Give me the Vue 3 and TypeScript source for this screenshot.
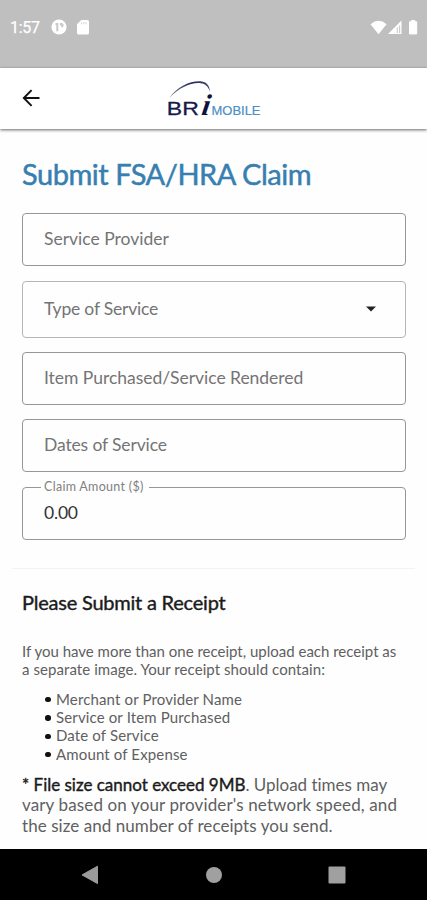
<script setup lang="ts">
interface Field {
  id: string
  label: string
  kind: 'text' | 'select' | 'filled'
  value?: string
}

const fields: Field[] = [
  { id: 'provider', label: 'Service Provider', kind: 'text' },
  { id: 'type', label: 'Type of Service', kind: 'select' },
  { id: 'item', label: 'Item Purchased/Service Rendered', kind: 'text' },
  { id: 'dates', label: 'Dates of Service', kind: 'text' },
  { id: 'amount', label: 'Claim Amount ($)', kind: 'filled', value: '0.00' },
]

const receiptItems: string[] = [
  'Merchant or Provider Name',
  'Service or Item Purchased',
  'Date of Service',
  'Amount of Expense',
]
</script>

<template>
  <div class="screen">
    <div class="status">
      <span class="clock">1:57</span>
      <svg class="app-icon" width="16" height="16" viewBox="0 0 16 16">
        <circle cx="8" cy="8" r="7.6" fill="#fff" />
        <path d="M4.500 4h2.800v8.300H5.300V6H4.500zM8.900 4h1.200c1.600 0 2.500.9 2.500 2.200S11.700 8.500 10.300 8.500V6.500H8.900z" fill="#c8c8c8" />
      </svg>
      <svg class="sd-icon" width="12" height="15" viewBox="0 0 12 15">
        <path d="M4.300 0H10.500Q12 0 12 1.500V13Q12 14.500 10.500 14.500H1.500Q0 14.500 0 13V4.300z" fill="#fff" />
        <path d="M4.600 2.300v2M6.800 2.300v2M9 2.300v2" stroke="#dcdcdc" stroke-width="1.300" />
      </svg>
      <svg class="signals" width="50" height="16" viewBox="0 0 50 16">
        <path d="M.5 4.200Q8.500-2.600 16.500 4.200L8.500 14.200z" fill="#fff" />
        <path d="M31.500.5V14H18z" fill="#fff" />
        <path d="M27.300 7.300V13M29.600 5.500V13" stroke="#cacaca" stroke-width="1.100" />
        <path d="M39.500 1.800h2V.3h3.200v1.500h2V13.900h-7.200z" fill="#fff" stroke="#fff" stroke-linejoin="round" />
      </svg>
    </div>

    <header class="appbar">
      <svg class="back" width="18" height="18" viewBox="0 0 18 18" fill="none" stroke="#111" stroke-width="1.900">
        <path d="M17.500 9H2M9.600 1.200L1.800 9l7.800 7.800" />
      </svg>
      <svg class="logo" width="100" height="40" viewBox="0 0 100 40">
        <defs>
          <linearGradient id="arc" x1="0" x2="1" y1="0" y2="0">
            <stop offset="0" stop-color="#777b8c" />
            <stop offset=".55" stop-color="#252c60" />
            <stop offset="1" stop-color="#454b70" />
          </linearGradient>
        </defs>
        <path d="M3 18.500C12 5.500 26 .2 36 1.500c5 .7 7.600 4.300 8 10.200C42 6.200 39.500 3.700 34.500 3.200 25 2.300 13 7.500 3 18.500z" fill="url(#arc)" />
        <text x=".8" y="35" class="bri" textLength="32" lengthAdjust="spacingAndGlyphs">BR</text>
        <text x="0" y="0" class="bigi" transform="translate(34.700 35) skewX(-9)">i</text>
        <text x="45.500" y="34.800" class="mobile" textLength="49" lengthAdjust="spacingAndGlyphs">MOBILE</text>
      </svg>
    </header>

    <main class="content">
      <h1>Submit FSA/HRA Claim</h1>
      <form class="fields">
        <div v-for="f in fields" :key="f.id" class="field" :class="[f.kind, f.id]">
          <span v-if="f.kind === 'filled'" class="floating">{{ f.label }}</span>
          <span v-if="f.kind === 'filled'" class="value">{{ f.value }}</span>
          <span v-else class="label">{{ f.label }}</span>
          <svg v-if="f.kind === 'select'" class="caret" width="10" height="6" viewBox="0 0 10 6">
            <path d="M0 .5h10L5 5.500z" fill="#222" />
          </svg>
        </div>
      </form>
      <hr>
      <section class="receipt">
        <h2>Please Submit a Receipt</h2>
        <p class="intro">
          <span class="l1">If you have more than one receipt, upload each receipt as</span><br>
          <span class="l2">a separate image. Your receipt should contain:</span>
        </p>
        <ul>
          <li v-for="item in receiptItems" :key="item">{{ item }}</li>
        </ul>
        <p class="note">
          <span class="n1"><strong>* File size cannot exceed 9MB</strong>. Upload times may</span><br>
          <span class="n2">vary based on your provider's network speed, and</span><br>
          <span class="n3">the size and number of receipts you send.</span>
        </p>
      </section>
    </main>

    <nav class="navbar">
      <svg width="18" height="20" viewBox="0 0 18 20"><path d="M16.500 1.200v17.400L1 9.900z" fill="#9b9b9b" stroke="#9b9b9b" stroke-linejoin="round" /></svg>
      <svg width="18" height="20" viewBox="0 0 18 20"><circle cx="9" cy="10" r="8" fill="#a0a0a0" /></svg>
      <svg width="18" height="20" viewBox="0 0 18 20"><rect x=".5" y="1.500" width="17" height="17" rx="1" fill="#a0a0a0" /></svg>
    </nav>
  </div>
</template>

<style>
body { background: #fff; }
</style>

<style scoped>
.screen {
  width: 427px;
  height: 900px;
  display: flex;
  flex-direction: column;
  overflow: hidden;
  background: #fefefe;
  font-family: Lato, "Liberation Sans", sans-serif;
  font-variant-ligatures: none;
  color: #606060;
}
.status {
  height: 67.500px;
  box-sizing: border-box;
  flex: none;
  display: flex;
  align-items: flex-start;
  padding: 19px 7px 0 10px;
  background: #bfbfbf;
}
.clock {
  width: 41px;
  font: 400 16px/18px Roboto, sans-serif;
  letter-spacing: -.3px;
  color: #fff;
  -webkit-text-stroke: .25px #fff;
}
.sd-icon { margin: 1px 0 0 10px; }
.signals { margin: 1px 0 0 auto; }
.appbar {
  height: 61px;
  flex: none;
  display: flex;
  align-items: flex-start;
  background: #fff;
  box-shadow: 0 1px 3px rgba(0, 0, 0, .6);
}
.back { margin: 21.500px 0 0 22px; }
.logo { margin: 12px 0 0 126px; overflow: visible; }
.bri { font: 400 19px "Liberation Sans", sans-serif; fill: #16194d; stroke: #16194d; stroke-width: .3px; }
.bigi { font: italic 700 30px "Liberation Serif", serif; fill: #0e123d; }
.mobile { font: 400 12px "Liberation Sans", sans-serif; fill: #4c8fc6; stroke: #4c8fc6; stroke-width: .2px; }
.content { flex: 1; }
h1 {
  margin: 27.500px 0 0 22px;
  font-size: 29px;
  line-height: 36px;
  font-weight: 400;
  letter-spacing: -.46px;
  color: #377fb0;
  -webkit-text-stroke: .5px #377fb0;
  white-space: nowrap;
}
.fields {
  margin: 21px 21px 0 22px;
  display: flex;
  flex-direction: column;
  gap: 15px;
}
.field {
  height: 53px;
  box-sizing: border-box;
  display: flex;
  align-items: center;
  padding: 0 29px 2px 21px;
  border: 1px solid #969696;
  border-radius: 4px;
  position: relative;
}
.select { height: 57px; padding-bottom: 2px; border-color: #b5b5b5; margin-bottom: -1px; }
.item { margin-bottom: -1px; }
.label { font-size: 17.500px; color: #747474; white-space: nowrap; }
.type .label { letter-spacing: -.2px; }
.item .label { letter-spacing: -.03px; }
.dates .label { letter-spacing: -.13px; }
.caret { margin-left: auto; }
.filled { padding-bottom: 2px; }
.value { font-size: 17.500px; letter-spacing: -.2px; color: #333; }
.floating {
  position: absolute;
  left: 18px;
  top: -9px;
  padding: 0 5px 0 3px;
  font-size: 12.500px;
  letter-spacing: .3px;
  line-height: 16px;
  background: #fefefe;
  color: #808080;
  white-space: nowrap;
}
hr { margin: 28px 12px 0; border: 0; border-top: 1px solid #f3f3f3; }
.receipt { padding: 20.500px 0 0 22px; white-space: nowrap; }
h2 {
  margin: 0;
  font-size: 20px;
  line-height: 24px;
  font-weight: 400;
  letter-spacing: -.22px;
  color: #1b1b1b;
  -webkit-text-stroke: .4px #1b1b1b;
}
.intro { margin: 28px 0 0; font-size: 15px; line-height: 18.500px; }
.l2 { letter-spacing: .07px; }
ul { list-style: none; margin: 11px 0 0; padding: 0 0 0 23px; font-size: 15px; line-height: 18.400px; letter-spacing: .14px; }
li { display: flex; align-items: center; }
li::before { content: ""; width: 5.500px; height: 5.500px; margin: 1.500px 5.500px 0 0; border-radius: 50%; background: #111; }
.note { margin: 11.500px 0 0; font-size: 17px; line-height: 20.500px; }
.n1 { letter-spacing: -.01px; }
.n2 { letter-spacing: .13px; }
.n3 { letter-spacing: .06px; }
.note strong { font-weight: 400; color: #1b1b1b; -webkit-text-stroke: .4px #1b1b1b; }
.navbar {
  height: 51px;
  flex: none;
  display: flex;
  justify-content: space-between;
  align-items: center;
  box-sizing: border-box;
  padding: 0 81px 0 81px;
  background: #000;
}
</style>
